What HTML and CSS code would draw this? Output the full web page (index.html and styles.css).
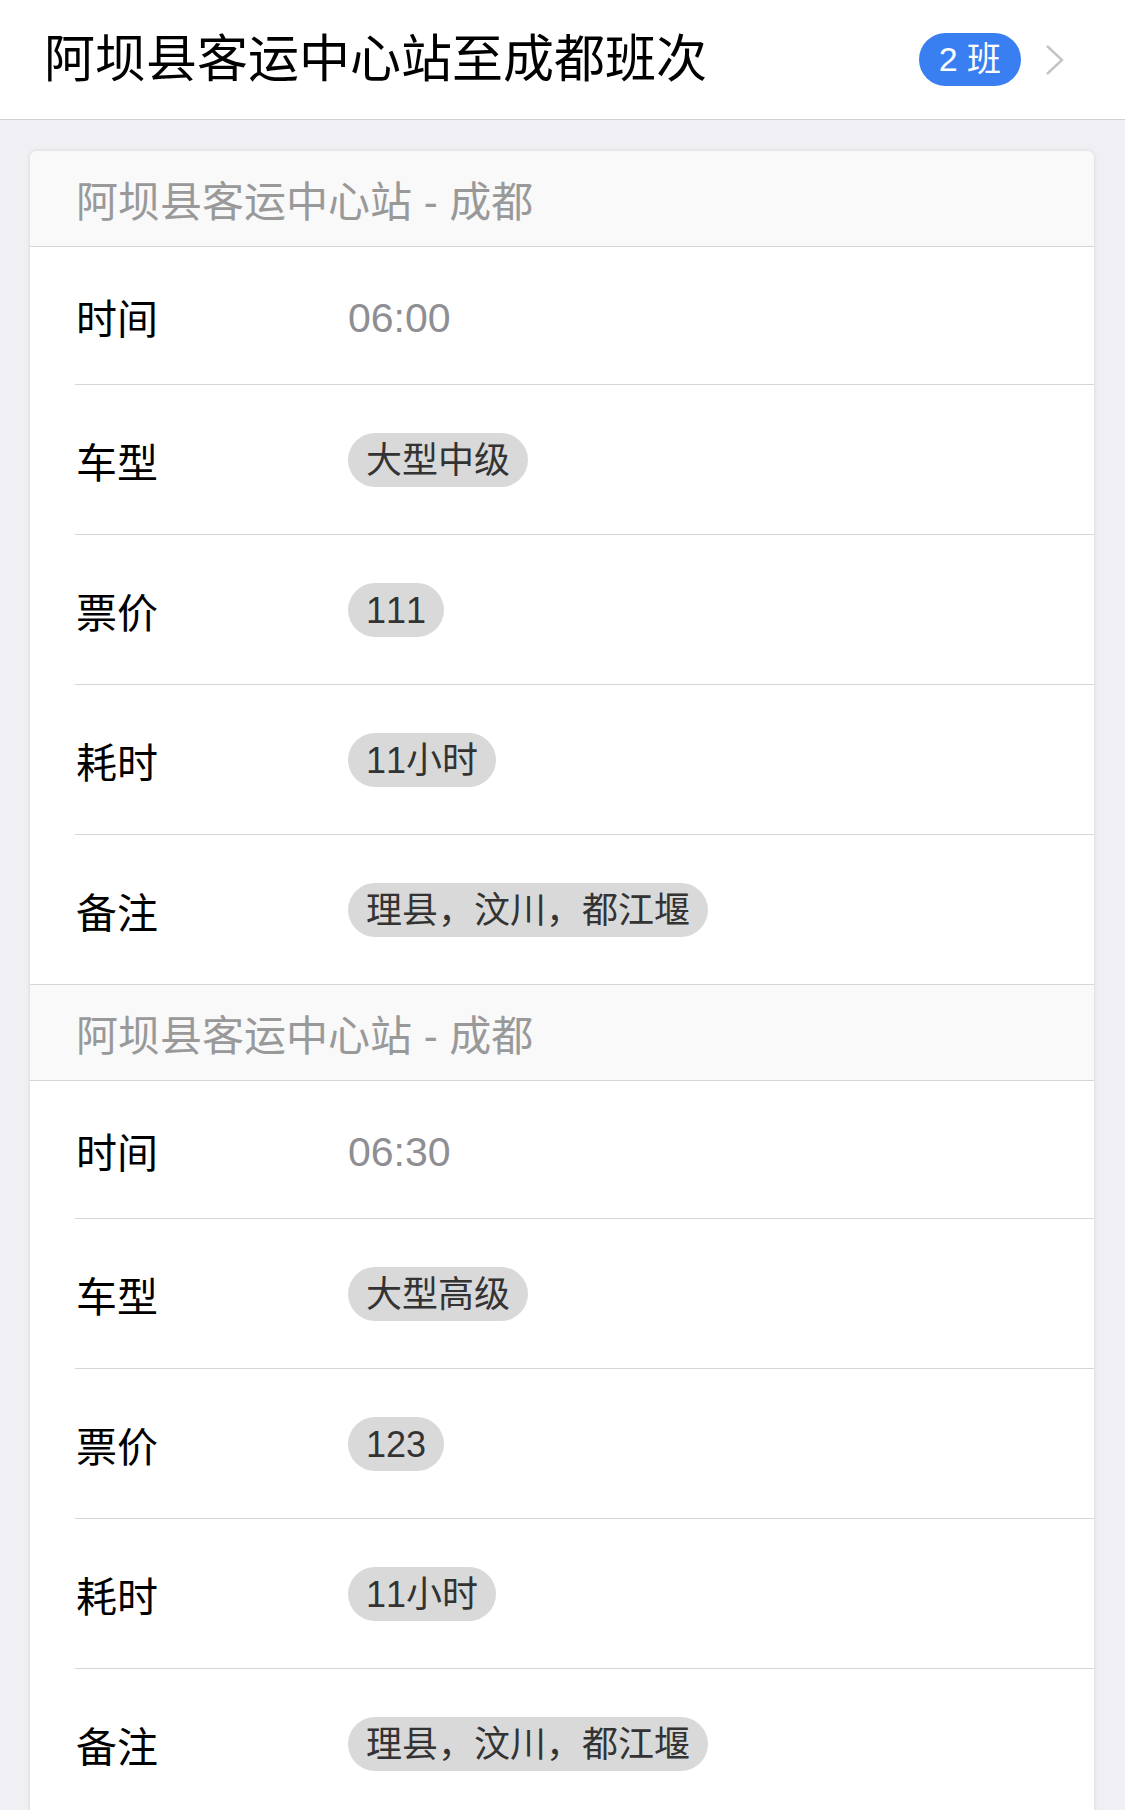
FILE: index.html
```html
<!DOCTYPE html>
<html lang="zh-CN">
<head>
<meta charset="utf-8">
<title>阿坝县客运中心站至成都班次</title>
<link rel="stylesheet" href="styles.css">
</head>
<body>
<header class="top">
  <h1 class="title">阿坝县客运中心站至成都班次</h1>
  <span class="badge">2 班</span>
  <svg class="chevron" width="20" height="32" viewBox="0 0 20 32"><path d="M2 2 L17 16 L2 30" fill="none" stroke="#c4c4c6" stroke-width="2.4"/></svg>
</header>
<main class="page">
  <div class="card">
    <section class="trip">
      <div class="trip-head">阿坝县客运中心站 - 成都</div>
      <div class="row row-time"><span class="label">时间</span><span class="time">06:00</span></div>
      <div class="row"><span class="label">车型</span><span class="tag">大型中级</span></div>
      <div class="row"><span class="label">票价</span><span class="tag">111</span></div>
      <div class="row"><span class="label">耗时</span><span class="tag">11小时</span></div>
      <div class="row row-last"><span class="label">备注</span><span class="tag">理县，汶川，都江堰</span></div>
    </section>
    <section class="trip">
      <div class="trip-head trip-head-next">阿坝县客运中心站 - 成都</div>
      <div class="row row-time"><span class="label">时间</span><span class="time">06:30</span></div>
      <div class="row"><span class="label">车型</span><span class="tag">大型高级</span></div>
      <div class="row"><span class="label">票价</span><span class="tag">123</span></div>
      <div class="row"><span class="label">耗时</span><span class="tag">11小时</span></div>
      <div class="row row-last"><span class="label">备注</span><span class="tag">理县，汶川，都江堰</span></div>
    </section>
  </div>
</main>
</body>
</html>
```
FILE: styles.css
```css
html, body {
  margin: 0;
  padding: 0;
}
body {
  background: #efeff4;
  font-family: "Liberation Sans", "Noto Sans CJK SC", sans-serif;
  font-kerning: none;
  color: #000;
  width: 1125px;
  height: 1810px;
  overflow: hidden;
}
.top {
  height: 119px;
  background: #fff;
  border-bottom: 1px solid #d2d2d6;
  display: flex;
  align-items: center;
  padding: 0 60px 0 44px;
  box-sizing: content-box;
}
.title {
  flex: 1;
  margin: 0;
  font-size: 51px;
  font-weight: normal;
  line-height: 1;
  color: #000;
}
.badge {
  background: #3a7ff2;
  color: #fff;
  font-size: 34px;
  height: 53px;
  line-height: 53px;
  padding: 0 20px;
  border-radius: 27px;
  white-space: pre;
}
.chevron {
  margin-left: 24px;
}
.page {
  padding: 31px 31px 0 30px;
}
.card {
  background: #fff;
  border-radius: 7px 7px 0 0;
  box-shadow: 0 0 4px rgba(0, 0, 0, 0.12);
  overflow: hidden;
}
.trip-head {
  height: 95px;
  background: #f9f9f9;
  border-bottom: 1px solid #d6d6d8;
  display: flex;
  align-items: center;
  padding-left: 46px;
  font-size: 42px;
  color: #999;
}
.trip-head-next {
  border-top: 1px solid #d6d6d8;
}
.row {
  margin-left: 45px;
  height: 149px;
  border-bottom: 1px solid #d6d6d8;
  display: flex;
  align-items: center;
}
.row-time {
  height: 137px;
}
.row-last {
  border-bottom: none;
}
.label {
  width: 272px;
  font-size: 41px;
  color: #000;
  padding-left: 1px;
}
.time {
  font-size: 41px;
  color: #8e8e93;
  padding-top: 6px;
}
.tag {
  background: #d9d9d9;
  color: #333;
  font-size: 36px;
  height: 54px;
  line-height: 56px;
  padding: 0 18px;
  border-radius: 27px;
  box-sizing: border-box;
}
```
